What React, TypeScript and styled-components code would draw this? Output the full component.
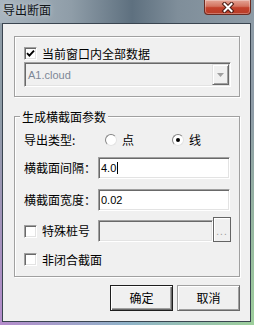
import React from 'react'
import styled, { createGlobalStyle } from 'styled-components'

const CJK = `"Noto Sans CJK SC", "Noto Sans", sans-serif`
const LATIN = `"Liberation Sans", "Noto Sans CJK SC", sans-serif`

const GlobalStyle = createGlobalStyle`
    html, body {
        margin: 0;
        padding: 0;
        background: #ffffff;
    }
    body {
        font-family: ${CJK};
    }
`

const Frame = styled.div`
    width: 254px;
    height: 325px;
    display: flex;
    flex-direction: column;
    box-sizing: border-box;
    background:
        linear-gradient(180deg, #8e9ca7 0%, #8e9ca7 35%, rgba(142, 156, 167, 0) 100%),
        linear-gradient(90deg, #b58ccc 0%, #8fb3c9 50%, #9dcf9b 100%);
    font-family: ${CJK};
    font-size: 12px;
    color: #000;
`

const TitleBar = styled.div`
    flex: none;
    height: 23px;
    display: flex;
    align-items: flex-start;
    justify-content: space-between;
    background: linear-gradient(90deg, #a9b5bf 0%, #8f9da8 28%, #5e707f 52%, #7f8e9a 70%, #8d9ba6 100%);
`

const Title = styled.div`
    margin: 3px 0 0 3px;
    line-height: 14px;
    font-size: 12px;
    color: #101418;
    text-shadow: 0 0 5px rgba(255, 255, 255, 0.55);
`

const CloseButton = styled.div`
    width: 47px;
    height: 15px;
    margin-right: 3px;
    box-sizing: border-box;
    display: flex;
    align-items: center;
    justify-content: center;
    border: 1px solid #6b2a20;
    border-top: none;
    border-radius: 0 0 4px 4px;
    background: linear-gradient(180deg, #e4a596 0%, #d3735f 45%, #c3412b 55%, #b83c27 100%);
    box-shadow: inset 0 0 0 1px rgba(255, 255, 255, 0.3);
`

const Client = styled.div`
    flex: 1;
    margin: 0 3px 3px 2px;
    border: 1px solid #3a4550;
    background: #f0f0f0;
    display: flex;
    flex-direction: column;
    padding: 12px 0 0 11px;
`

const GroupBox = styled.div<{ $height: number; $mt?: number; $pt: number }>`
    position: relative;
    box-sizing: border-box;
    width: 226px;
    height: ${({ $height }) => $height}px;
    margin-top: ${({ $mt }) => $mt ?? 0}px;
    padding: ${({ $pt }) => $pt}px 0 0 9px;
    border: 1px solid #a0a0a0;
    box-shadow: inset 1px 1px #ffffff, 1px 1px #ffffff;
    display: flex;
    flex-direction: column;
`

const Caption = styled.div`
    position: absolute;
    top: -7px;
    left: 5px;
    padding: 0 2px;
    line-height: 13px;
    background: #f0f0f0;
`

const Row = styled.div<{ $h: number; $mt?: number; $align?: string }>`
    display: flex;
    align-items: ${({ $align }) => $align ?? 'center'};
    height: ${({ $h }) => $h}px;
    margin-top: ${({ $mt }) => $mt ?? 0}px;
`

const Label = styled.div<{ $w: number }>`
    width: ${({ $w }) => $w}px;
    flex: none;
    line-height: 14px;
    white-space: nowrap;
`

const CheckLabel = styled.label<{ $w?: number; $h: number }>`
    display: flex;
    align-items: center;
    gap: 5px;
    flex: none;
    width: ${({ $w }) => ($w ? $w + 'px' : 'auto')};
    height: ${({ $h }) => $h}px;
    line-height: 14px;
    white-space: nowrap;
`

const CheckBox = styled.span`
    width: 13px;
    height: 13px;
    flex: none;
    box-sizing: border-box;
    display: flex;
    align-items: center;
    justify-content: center;
    border: 1px solid;
    border-color: #a0a0a0 #ffffff #ffffff #a0a0a0;
    box-shadow: inset 1px 1px #696969, inset -1px -1px #e3e3e3;
    background: #ffffff;
`

const RadioOption = styled.label<{ $w?: number }>`
    display: flex;
    align-items: center;
    gap: 5px;
    flex: none;
    width: ${({ $w }) => ($w ? $w + 'px' : 'auto')};
    line-height: 14px;
`

const RadioCircle = styled.span<{ $checked?: boolean }>`
    width: 12px;
    height: 12px;
    flex: none;
    box-sizing: border-box;
    border-radius: 50%;
    border: 1px solid;
    border-color: #848484 #e3e3e3 #e3e3e3 #848484;
    background: #ffffff;
    display: flex;
    align-items: center;
    justify-content: center;

    &::after {
        content: '';
        width: 4px;
        height: 4px;
        border-radius: 50%;
        background: ${({ $checked }) => ($checked ? '#000000' : 'transparent')};
    }
`

const TextBox = styled.div<{ $w: number; $disabled?: boolean }>`
    width: ${({ $w }) => $w}px;
    height: 22px;
    flex: none;
    box-sizing: border-box;
    display: flex;
    align-items: center;
    padding-left: 2px;
    border: 1px solid;
    border-color: #a0a0a0 #ffffff #ffffff #a0a0a0;
    box-shadow: inset 1px 1px #696969, inset -1px -1px #e3e3e3;
    background: ${({ $disabled }) => ($disabled ? '#f0f0f0' : '#ffffff')};
    font-family: ${LATIN};
    font-size: 11px;
    color: #000;
`

const Caret = styled.span`
    width: 1px;
    height: 12px;
    margin-left: 1px;
    background: #000;
`

const EllipsisButton = styled.div`
    width: 18px;
    height: 25px;
    flex: none;
    box-sizing: border-box;
    display: flex;
    align-items: flex-end;
    justify-content: center;
    padding-bottom: 5px;
    border: 1px solid #646464;
    box-shadow: inset 1px 1px #ffffff;
    background: #f0f0f0;
    font-family: ${LATIN};
    font-size: 10px;
    line-height: 8px;
    letter-spacing: 1px;
    color: #9a9a9a;
`

const Combo = styled.div`
    width: 207px;
    height: 25px;
    box-sizing: border-box;
    display: flex;
    padding: 1px;
    border: 1px solid;
    border-color: #a0a0a0 #ffffff #ffffff #a0a0a0;
    box-shadow: inset 1px 1px #696969, inset -1px -1px #e3e3e3;
    background: #f0f0f0;
`

const ComboText = styled.div`
    flex: 1;
    display: flex;
    align-items: center;
    padding-left: 2px;
    font-family: ${LATIN};
    font-size: 11px;
    color: #7d8796;
`

const ComboArrow = styled.div`
    width: 17px;
    flex: none;
    box-sizing: border-box;
    display: flex;
    align-items: center;
    justify-content: center;
    border: 1px solid;
    border-color: #e3e3e3 #696969 #696969 #e3e3e3;
    box-shadow: inset 1px 1px #ffffff, inset -1px -1px #a0a0a0;
    background: #f0f0f0;
`

const ButtonBar = styled.div`
    width: 226px;
    margin-top: 8px;
    display: flex;
    justify-content: flex-end;
    gap: 4px;
`

const DialogButton = styled.div<{ $default?: boolean }>`
    width: 63px;
    height: 26px;
    box-sizing: border-box;
    display: flex;
    align-items: center;
    justify-content: center;
    border: 1px solid ${({ $default }) => ($default ? '#1e1e1e' : '#a0a0a0')};
    border-right-color: ${({ $default }) => ($default ? '#1e1e1e' : '#696969')};
    border-bottom-color: ${({ $default }) => ($default ? '#1e1e1e' : '#696969')};
    box-shadow: ${({ $default }) =>
        $default
            ? 'inset 1px 1px #ffffff, inset -1px -1px #696969, inset -2px -2px #a0a0a0'
            : 'inset 1px 1px #ffffff, inset -1px -1px #a0a0a0'};
    background: #f0f0f0;
    line-height: 14px;
`

function CheckMark() {
    return (
        <svg width="9" height="9" viewBox="0 0 9 9">
            <path d="M1 4.2 L3.4 6.6 L8 1.6" fill="none" stroke="#000" strokeWidth="1.9" />
        </svg>
    )
}

function CloseGlyph() {
    return (
        <svg width="14" height="11" viewBox="0 0 14 11">
            <path d="M3.5 2 L10.5 9 M10.5 2 L3.5 9" stroke="#4a1c14" strokeWidth="4" strokeLinecap="square" />
            <path d="M3.5 2 L10.5 9 M10.5 2 L3.5 9" stroke="#ffffff" strokeWidth="2" strokeLinecap="square" />
        </svg>
    )
}

function DownArrow() {
    return (
        <svg width="7" height="4" viewBox="0 0 7 4">
            <path d="M0 0 H7 L3.5 4 Z" fill="#a0a0a0" />
        </svg>
    )
}

export default function App() {
    return (
        <>
            <GlobalStyle />
            <Frame>
                <TitleBar>
                    <Title>导出断面</Title>
                    <CloseButton>
                        <CloseGlyph />
                    </CloseButton>
                </TitleBar>
                <Client>
                    <GroupBox $height={61} $pt={8}>
                        <Row $h={17}>
                            <CheckLabel $h={17}>
                                <CheckBox>
                                    <CheckMark />
                                </CheckBox>
                                当前窗口内全部数据
                            </CheckLabel>
                        </Row>
                        <Combo>
                            <ComboText>A1.cloud</ComboText>
                            <ComboArrow>
                                <DownArrow />
                            </ComboArrow>
                        </Combo>
                    </GroupBox>

                    <GroupBox $height={161} $mt={19} $pt={12}>
                        <Caption>生成横截面参数</Caption>
                        <Row $h={22}>
                            <Label $w={81}>导出类型:</Label>
                            <RadioOption $w={67}>
                                <RadioCircle />点
                            </RadioOption>
                            <RadioOption>
                                <RadioCircle $checked />线
                            </RadioOption>
                        </Row>
                        <Row $h={22} $mt={6}>
                            <Label $w={74}>横截面间隔：</Label>
                            <TextBox $w={132}>
                                4.0
                                <Caret />
                            </TextBox>
                        </Row>
                        <Row $h={22} $mt={10}>
                            <Label $w={74}>横截面宽度：</Label>
                            <TextBox $w={132}>0.02</TextBox>
                        </Row>
                        <Row $h={25} $mt={6} $align="flex-end">
                            <CheckLabel $w={74} $h={22}>
                                <CheckBox />
                                特殊桩号
                            </CheckLabel>
                            <TextBox $w={115} $disabled />
                            <EllipsisButton>...</EllipsisButton>
                        </Row>
                        <Row $h={17} $mt={9}>
                            <CheckLabel $h={17}>
                                <CheckBox />
                                非闭合截面
                            </CheckLabel>
                        </Row>
                    </GroupBox>

                    <ButtonBar>
                        <DialogButton $default>确定</DialogButton>
                        <DialogButton>取消</DialogButton>
                    </ButtonBar>
                </Client>
            </Frame>
        </>
    )
}
